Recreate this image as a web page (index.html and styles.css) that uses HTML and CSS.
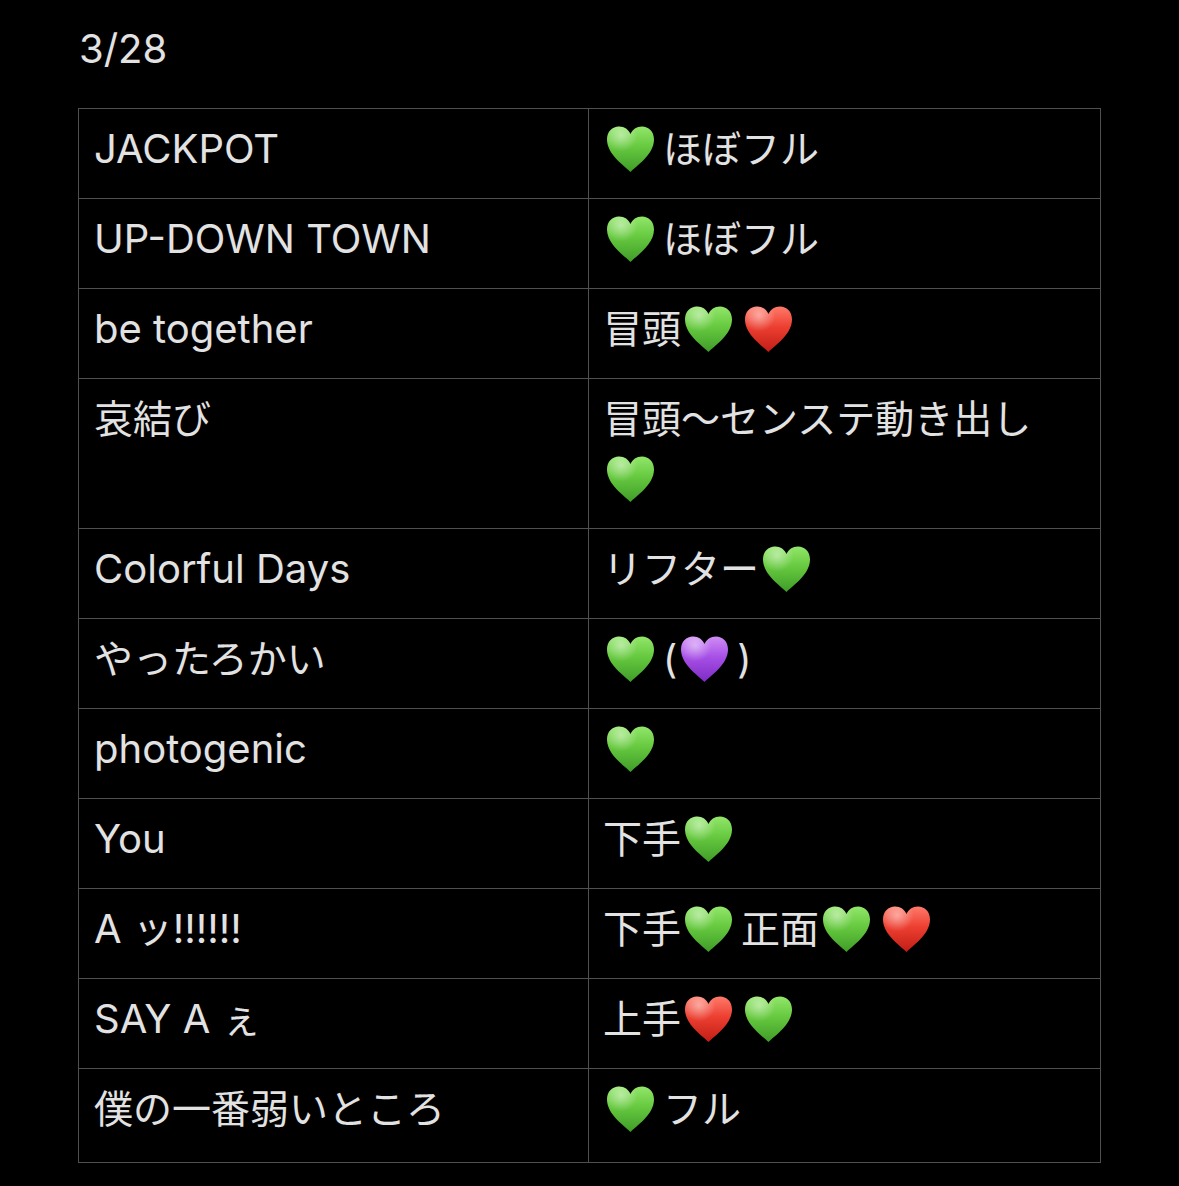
FILE: index.html
```html
<!DOCTYPE html>
<html lang="ja">
<head>
<meta charset="utf-8">
<link rel="stylesheet" href="styles.css">
</head>
<body>
<svg class="defs" width="0" height="0" aria-hidden="true">
  <defs>
    <linearGradient id="gg" x1="0" y1="0" x2="0" y2="1">
      <stop offset="0" stop-color="#92e66a"/>
      <stop offset="0.45" stop-color="#66c93f"/>
      <stop offset="1" stop-color="#3f9c28"/>
    </linearGradient>
    <linearGradient id="gr" x1="0" y1="0" x2="0" y2="1">
      <stop offset="0" stop-color="#ff7a6a"/>
      <stop offset="0.45" stop-color="#ec3f31"/>
      <stop offset="1" stop-color="#c21d15"/>
    </linearGradient>
    <linearGradient id="gp" x1="0" y1="0" x2="0" y2="1">
      <stop offset="0" stop-color="#d08cf6"/>
      <stop offset="0.45" stop-color="#a750e6"/>
      <stop offset="1" stop-color="#7d2bc4"/>
    </linearGradient>
    <radialGradient id="shine" cx="0.3" cy="0.2" r="0.35">
      <stop offset="0" stop-color="#ffffff" stop-opacity="0.45"/>
      <stop offset="1" stop-color="#ffffff" stop-opacity="0"/>
    </radialGradient>
    <path id="hp" d="M24.5 47 C 20 42, 1 30, 1 14.5 C 1 6.5, 6.5 1.5, 13 1.5 C 18.5 1.5, 22.5 4.5, 24.5 9 C 26.5 4.5, 30.5 1.5, 36 1.5 C 42.5 1.5, 48 6.5, 48 14.5 C 48 30, 29 42, 24.5 47 Z"/>
  </defs>
</svg>

<main class="page">
  <div class="date">3/28</div>
  <table class="list">
    <tr>
      <td class="song">JACKPOT</td>
      <td class="note"><span class="emo"><svg class="heart" viewBox="0 0 49 48"><use href="#hp" fill="url(#gg)"/><use href="#hp" fill="url(#shine)"/></svg></span>ほぼフル</td>
    </tr>
    <tr>
      <td class="song">UP-DOWN TOWN</td>
      <td class="note"><span class="emo"><svg class="heart" viewBox="0 0 49 48"><use href="#hp" fill="url(#gg)"/><use href="#hp" fill="url(#shine)"/></svg></span>ほぼフル</td>
    </tr>
    <tr>
      <td class="song">be together</td>
      <td class="note">冒頭<span class="emo"><svg class="heart" viewBox="0 0 49 48"><use href="#hp" fill="url(#gg)"/><use href="#hp" fill="url(#shine)"/></svg></span><span class="emo"><svg class="heart" viewBox="0 0 49 48"><use href="#hp" fill="url(#gr)"/><use href="#hp" fill="url(#shine)"/></svg></span></td>
    </tr>
    <tr>
      <td class="song ja">哀結び</td>
      <td class="note">冒頭〜センステ動き出し<br><span class="emo"><svg class="heart" viewBox="0 0 49 48"><use href="#hp" fill="url(#gg)"/><use href="#hp" fill="url(#shine)"/></svg></span></td>
    </tr>
    <tr>
      <td class="song">Colorful Days</td>
      <td class="note">リフター<span class="emo"><svg class="heart" viewBox="0 0 49 48"><use href="#hp" fill="url(#gg)"/><use href="#hp" fill="url(#shine)"/></svg></span></td>
    </tr>
    <tr>
      <td class="song ja">やったろかい</td>
      <td class="note"><span class="emo"><svg class="heart" viewBox="0 0 49 48"><use href="#hp" fill="url(#gg)"/><use href="#hp" fill="url(#shine)"/></svg></span>(<span class="emo"><svg class="heart" viewBox="0 0 49 48"><use href="#hp" fill="url(#gp)"/><use href="#hp" fill="url(#shine)"/></svg></span>)</td>
    </tr>
    <tr>
      <td class="song">photogenic</td>
      <td class="note"><span class="emo"><svg class="heart" viewBox="0 0 49 48"><use href="#hp" fill="url(#gg)"/><use href="#hp" fill="url(#shine)"/></svg></span></td>
    </tr>
    <tr>
      <td class="song">You</td>
      <td class="note">下手<span class="emo"><svg class="heart" viewBox="0 0 49 48"><use href="#hp" fill="url(#gg)"/><use href="#hp" fill="url(#shine)"/></svg></span></td>
    </tr>
    <tr>
      <td class="song">A ッ!!!!!!</td>
      <td class="note">下手<span class="emo"><svg class="heart" viewBox="0 0 49 48"><use href="#hp" fill="url(#gg)"/><use href="#hp" fill="url(#shine)"/></svg></span>正面<span class="emo"><svg class="heart" viewBox="0 0 49 48"><use href="#hp" fill="url(#gg)"/><use href="#hp" fill="url(#shine)"/></svg></span><span class="emo"><svg class="heart" viewBox="0 0 49 48"><use href="#hp" fill="url(#gr)"/><use href="#hp" fill="url(#shine)"/></svg></span></td>
    </tr>
    <tr>
      <td class="song">SAY A ぇ</td>
      <td class="note">上手<span class="emo"><svg class="heart" viewBox="0 0 49 48"><use href="#hp" fill="url(#gr)"/><use href="#hp" fill="url(#shine)"/></svg></span><span class="emo"><svg class="heart" viewBox="0 0 49 48"><use href="#hp" fill="url(#gg)"/><use href="#hp" fill="url(#shine)"/></svg></span></td>
    </tr>
    <tr class="last">
      <td class="song ja">僕の一番弱いところ</td>
      <td class="note"><span class="emo"><svg class="heart" viewBox="0 0 49 48"><use href="#hp" fill="url(#gg)"/><use href="#hp" fill="url(#shine)"/></svg></span>フル</td>
    </tr>
  </table>
</main>
</body>
</html>
```

FILE: styles.css
```css
html, body {
  margin: 0;
  padding: 0;
  background: #000;
}

body {
  color: #e2e2e2;
  font-family: "Inter", "Noto Sans CJK JP", sans-serif;
  font-size: 40px;
}

.defs {
  position: absolute;
  width: 0;
  height: 0;
  overflow: hidden;
}

.page {
  padding: 0 0 0 78px;
}

.date {
  height: 108px;
  box-sizing: border-box;
  padding: 24px 0 0 1px;
  font-size: 40px;
  line-height: 50px;
}

.list {
  width: 1023px;
  border-collapse: collapse;
  table-layout: fixed;
}

.list td {
  border: 1px solid #505050;
  height: 89px;
  box-sizing: border-box;
  padding: 10px 14px 19px 14px;
  line-height: 60px;
  vertical-align: top;
  white-space: nowrap;
}

.list td.song {
  width: 510px;
  padding-left: 15px;
}

.list td.note,
.list td.ja {
  font-size: 39px;
}

.list tr.last td {
  height: 94px;
}

.emo {
  display: inline-block;
  width: 60px;
  height: 48px;
  vertical-align: -10px;
}

.heart {
  display: block;
  width: 49px;
  height: 48px;
  margin-left: 3px;
}
```
